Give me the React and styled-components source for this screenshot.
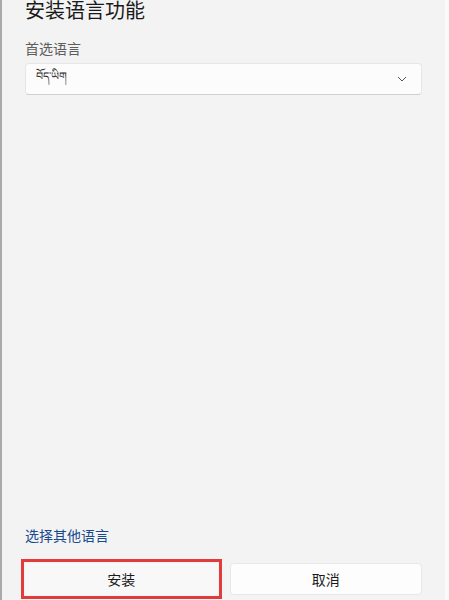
import { createGlobalStyle, styled } from "styled-components";

const GlobalStyle = createGlobalStyle`
    html, body {
        margin: 0;
        padding: 0;
        background: #f3f3f3;
        overflow: hidden;
    }
    body {
        font-family: "Noto Sans CJK SC", "Noto Sans", sans-serif;
        color: #1b1b1b;
    }
`;

const Frame = styled.div`
    display: flex;
    width: 449px;
    height: 600px;
    box-sizing: border-box;
    border-left: 2px solid #a9a9a9;
    overflow: hidden;
`;
const Panel = styled.div`
    flex: 1;
    display: flex;
    flex-direction: column;
    padding: 0 23px 5px;
    background: #f3f3f3;
`;
const Edge = styled.div`
    width: 4px;
    background: #fafafa;
`;
const Title = styled.h1`
    margin: -3px 0 0;
    font-size: 20px;
    line-height: 26px;
    font-weight: 400;
    color: #1a1a1a;
`;
const Label = styled.div`
    margin-top: 15px;
    font-size: 14px;
    line-height: 20px;
    color: #5d5d5d;
`;
const Select = styled.div`
    margin-top: 5px;
    height: 32px;
    box-sizing: border-box;
    display: flex;
    align-items: center;
    justify-content: space-between;
    padding: 0 14px 0 10px;
    background: #fcfcfc;
    border: 1px solid #e6e6e6;
    border-bottom-color: #cfcfcf;
    border-radius: 4px;
    font-size: 11px;
`;
const Footer = styled.div`
    margin-top: auto;
`;
const Link = styled.div`
    font-size: 14px;
    line-height: 20px;
    color: #1a4a8e;
`;
const Buttons = styled.div`
    display: grid;
    grid-template-columns: 1fr 1fr;
    gap: 12px;
    margin-top: 18px;
`;
const Button = styled.button`
    height: 32px;
    border: 1px solid ${p => (p.$marked ? "#f7f7f7" : "#e8e8e8")};
    border-radius: ${p => (p.$marked ? "0" : "4px")};
    background: ${p => (p.$marked ? "#f8f8f8" : "#fdfdfd")};
    font-family: inherit;
    font-size: 14px;
    color: #1b1b1b;
    outline: ${p => (p.$marked ? "3px solid #e23b3b" : "none")};
    outline-offset: 1px;
`;

function Chevron() {
    return (
        <svg width="10" height="6" viewBox="0 0 10 6">
            <path d="M1 1l4 4 4-4" fill="none" stroke="#555" strokeWidth="1" />
        </svg>
    );
}

export default function App() {
    return (
        <Frame>
            <GlobalStyle />
            <Panel>
                <Title>安装语言功能</Title>
                <Label>首选语言</Label>
                <Select>
                    <span>བོད་ཡིག</span>
                    <Chevron />
                </Select>
                <Footer>
                    <Link>选择其他语言</Link>
                    <Buttons>
                        <Button $marked>安装</Button>
                        <Button>取消</Button>
                    </Buttons>
                </Footer>
            </Panel>
            <Edge />
        </Frame>
    );
}
